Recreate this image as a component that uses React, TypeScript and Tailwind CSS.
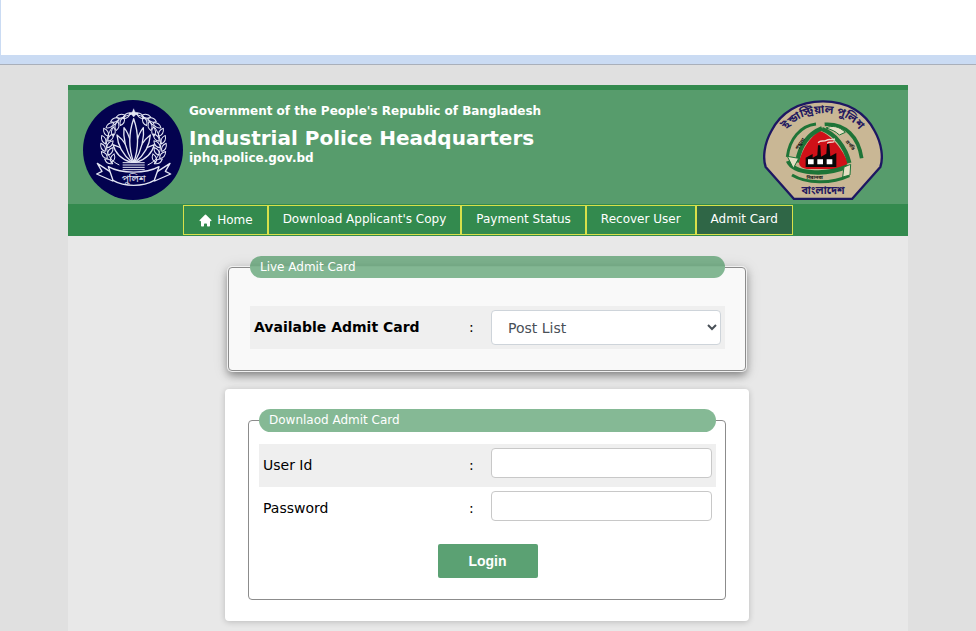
import { useId } from "react";
import type { ReactNode } from "react";
import { HiHome } from "react-icons/hi";

type NavItem = {
  label: string;
  icon?: boolean;
  active?: boolean;
};

const navItems: NavItem[] = [
  { label: "Home", icon: true },
  { label: "Download Applicant's Copy" },
  { label: "Payment Status" },
  { label: "Recover User" },
  { label: "Admit Card", active: true },
];

// x, y, rotation of each leaf on the left half of the wreath
const wreathLeaves = [
  [146, 62, 50],
  [128, 64, 78],
  [133, 79, 25],
  [111, 75, 68],
  [117, 93, 12],
  [96, 91, 58],
  [106, 110, 2],
  [84, 112, -30],
  [98, 128, 38],
  [77, 134, -24],
  [96, 148, 42],
  [75, 157, -28],
  [97, 169, 34],
  [79, 180, -40],
  [104, 190, 18],
  [92, 199, -60],
];

const WreathHalf = () => (
  <g>
    <path d="M160 58C120 66 86 106 85 148C85 174 96 198 124 210" />
    {wreathLeaves.map(([x, y, r]) => (
      <path
        key={`${x}-${y}`}
        d="M0 14C-8 5-7-5 0-14C7-5 8 5 0 14Z"
        transform={`translate(${x} ${y}) rotate(${r})`}
      />
    ))}
  </g>
);

const PoliceEmblem = () => (
  <svg
    viewBox="15 15 300 300"
    className="size-[100px] shrink-0"
    role="img"
    aria-label="Bangladesh Police"
  >
    <circle cx="165" cy="165" r="150" fill="#03024f" />
    <g fill="none" stroke="#e4e6f4" strokeWidth="3" strokeLinejoin="round">
      <WreathHalf />
      <g transform="translate(333 0) scale(-1 1)">
        <WreathHalf />
      </g>
      <path
        d="M167 41L171 51L182 55L173 59L167 66L161 59L152 55L163 51Z"
        fill="#e4e6f4"
        strokeWidth="1"
      />
      <g fill="#03024f" strokeWidth="4">
        <path d="M160 202C132 194 112 176 105 149C130 156 151 174 163 202Z" />
        <path d="M174 202C202 194 222 176 229 149C204 156 183 174 171 202Z" />
        <path d="M162 202C136 180 119 151 117 120C143 139 157 167 165 202Z" />
        <path d="M172 202C198 180 215 151 217 120C191 139 177 167 169 202Z" />
        <path d="M164 202C144 165 134 130 138 98C157 121 164 158 167 202Z" />
        <path d="M170 202C190 165 200 130 196 98C177 121 170 158 167 202Z" />
        <path d="M167 202C151 158 151 117 167 71C183 117 183 158 167 202Z" />
      </g>
      <path
        d="M134 203H200M134 210H200M134 217H200M134 224H200"
        strokeWidth="3"
      />
      <g fill="#03024f" strokeWidth="4">
        <path d="M96 230L58 205L72 229L56 237L104 258L107 240Z" />
        <path d="M238 230L276 205L262 229L278 237L230 258L227 240Z" />
        <path d="M91 215C130 237 204 237 243 215L229 256C195 276 139 276 105 256Z" />
      </g>
    </g>
    <text
      x="167"
      y="260"
      textAnchor="middle"
      fontSize="30"
      fill="#e4e6f4"
      fontFamily="'Noto Sans Bengali', 'Noto Sans', sans-serif"
    >
      পুলিশ
    </text>
  </svg>
);

const IndustrialPoliceEmblem = () => {
  const arcId = useId();
  const leftId = useId();
  const rightId = useId();

  return (
    <svg
      viewBox="15 15 360 300"
      className="h-[100px] w-[120px] shrink-0"
      role="img"
      aria-label="Industrial Police"
    >
      <defs>
        <path id={arcId} d="M86 110C126 36 264 36 306 110" />
        <path id={leftId} d="M114 172L146 126" />
        <path id={rightId} d="M254 130L292 176" />
      </defs>
      <path
        d="M108 312L23 216C14 190 18 147 40 108C68 52 122 19 195 19C268 19 322 52 350 108C372 147 376 190 367 216L282 312Z"
        fill="#c9b795"
        stroke="#1d1762"
        strokeWidth="7"
        strokeLinejoin="round"
      />
      <path
        d="M186 108C216 118 258 166 269 204C262 216 248 220 232 222H146C130 220 120 212 124 196C134 162 156 124 186 108Z"
        fill="#cf1018"
      />
      <g fill="none" stroke="#1e7437">
        <path d="M174 87C128 92 94 132 88 186" strokeWidth="9" />
        <path d="M192 100C152 116 126 152 117 202" strokeWidth="13" />
        <path d="M200 88C262 84 302 126 311 190" strokeWidth="11" />
        <path d="M192 102C230 116 262 154 274 204" strokeWidth="13" />
        <path d="M90 198C106 236 200 244 270 214" strokeWidth="13" />
        <path d="M102 240C145 266 219 268 274 242" strokeWidth="9" />
      </g>
      <path
        d="M88 184L122 190L106 220ZM204 99C222 90 244 94 262 112L244 120C232 108 220 104 204 99ZM258 216L278 208L276 240L254 246Z"
        fill="#e5dfc4"
        stroke="#1e7437"
        strokeWidth="3"
      />
      <path
        d="M143 216V188L164 177V188L178 181L180 151H187L189 185L205 176L207 147H214L217 184L235 174V216Z"
        fill="#080808"
      />
      <path
        d="M150 193H167V208H150ZM178 193H195V208H178ZM206 193H223V208H206Z"
        fill="#fff"
      />
      <path
        d="M181 144C183 134 197 141 205 136C213 131 219 136 231 132M209 146C208 139 220 144 229 140"
        fill="none"
        stroke="#f0d6cd"
        strokeWidth="4"
      />
      <g
        fill="#241960"
        fontFamily="'Noto Sans Bengali', 'Noto Sans', sans-serif"
        fontWeight="bold"
        textAnchor="middle"
      >
        <text fontSize="34">
          <textPath href={`#${arcId}`} startOffset="50%">
            ইন্ডাস্ট্রিয়াল পুলিশ
          </textPath>
        </text>
        <text x="195" y="298" fontSize="32">
          বাংলাদেশ
        </text>
        <g fill="#111" fontSize="14">
          <text>
            <textPath href={`#${leftId}`} startOffset="50%">
              শৃঙ্খলা
            </textPath>
          </text>
          <text>
            <textPath href={`#${rightId}`} startOffset="50%">
              প্রগতি
            </textPath>
          </text>
          <text x="170" y="251">
            নিরাপত্তা
          </text>
        </g>
      </g>
    </svg>
  );
};

const Header = () => (
  <header className="border-t-5 border-[#338a4e] bg-[#579c6c]">
    <div className="flex h-[114px] items-start px-[15px] pt-[10px]">
      <PoliceEmblem />
      <div className="flex-1 pl-[6px] font-bold text-white">
        <p className="text-[12px] leading-[22px]">
          Government of the People's Republic of Bangladesh
        </p>
        <h1 className="pt-1 text-[20px] leading-6">
          Industrial Police Headquarters
        </h1>
        <p className="text-[12px] leading-4">iphq.police.gov.bd</p>
      </div>
      <div className="pr-[10px]">
        <IndustrialPoliceEmblem />
      </div>
    </div>
    <nav className="flex h-8 justify-center bg-[#338a4e] pt-px text-[12px] text-white">
      {navItems.map((item) => (
        <a
          key={item.label}
          href="#"
          className={`flex h-[30px] border border-[#d8e04a] px-[14px] leading-4 ${
            item.icon ? "items-center gap-1" : "items-start pt-[5px]"
          } ${item.active ? "bg-[#2f6646]" : ""}`}
        >
          {item.icon && <HiHome className="size-[15px]" />}
          {item.label}
        </a>
      ))}
    </nav>
  </header>
);

type FieldRowProps = {
  id: string;
  label: string;
  bold?: boolean;
  shaded?: boolean;
  children: ReactNode;
};

const FieldRow = ({ id, label, bold, shaded, children }: FieldRowProps) => (
  <div className={`flex h-[43px] px-1 pt-1 ${shaded ? "bg-[#efefef]" : ""}`}>
    <label
      htmlFor={id}
      className={`flex-1 leading-[35px] ${bold ? "font-bold" : ""}`}
    >
      {label}
    </label>
    <span className="w-[22px] leading-[35px]">:</span>
    {children}
  </div>
);

const LiveAdmitCard = () => (
  <fieldset className="mx-auto max-w-[518px] rounded border border-[#8c8c8c] bg-[#f9f9f9] pr-5 pb-[21px] pl-[21px] shadow-[0_0_0_1px_#f0f0f0,0_4px_8px_rgba(0,0,0,0.4),0_2px_16px_rgba(0,0,0,0.15)]">
    <legend className="w-full rounded-full bg-[#338a4e]/60 px-[10px] text-[12px] leading-[22px] text-white">
      Live Admit Card
    </legend>
    <div className="pt-7">
      <FieldRow id="post" label="Available Admit Card" bold shaded>
        <select
          id="post"
          className="h-[35px] w-[230px] rounded border border-[#ced4da] bg-white pl-3 text-[#495057]"
        >
          <option>Post List</option>
        </select>
      </FieldRow>
    </div>
  </fieldset>
);

const inputClass =
  "h-[30px] w-[221px] rounded border border-[#c8c8c8] bg-white px-3";

const DownloadAdmitCard = () => (
  <form
    className="mx-auto mt-[18px] max-w-[524px] rounded bg-white px-[23px] pt-5 pb-[21px] shadow-[0_1px_6px_rgba(0,0,0,0.2)]"
    onSubmit={(e) => e.preventDefault()}
  >
    <fieldset className="rounded border border-[#8c8c8c] pr-[9px] pb-[21px] pl-[10px]">
      <legend className="w-full rounded-full bg-[#338a4e]/60 px-[10px] text-[12px] leading-[23px] text-white">
        Downlaod Admit Card
      </legend>
      <div className="pt-3">
        <FieldRow id="user-id" label="User Id" shaded>
          <input id="user-id" type="text" className={inputClass} />
        </FieldRow>
        <FieldRow id="password" label="Password">
          <input id="password" type="password" className={inputClass} />
        </FieldRow>
      </div>
      <div className="pt-[14px] text-center">
        <button
          type="submit"
          className="h-[34px] w-[100px] rounded-xs bg-[#5ba173] font-['Liberation_Sans',sans-serif] font-bold text-white"
        >
          Login
        </button>
      </div>
    </fieldset>
  </form>
);

export default function App() {
  return (
    <div className="flex min-h-screen flex-col bg-[#e0e0e0] font-['DejaVu_Sans',sans-serif] text-[14px] text-black">
      <div className="h-[65px] border-b border-[#a9afba] bg-[#cadbf3]">
        <div className="h-[55px] border-l border-[#cadbf3] bg-white" />
      </div>
      <div className="mx-auto mt-5 flex w-full max-w-[840px] flex-1 flex-col bg-[#e8e8e8]">
        <Header />
        <main className="pt-5 pr-[18px] pb-[10px] pl-4">
          <LiveAdmitCard />
          <DownloadAdmitCard />
        </main>
      </div>
    </div>
  );
}
